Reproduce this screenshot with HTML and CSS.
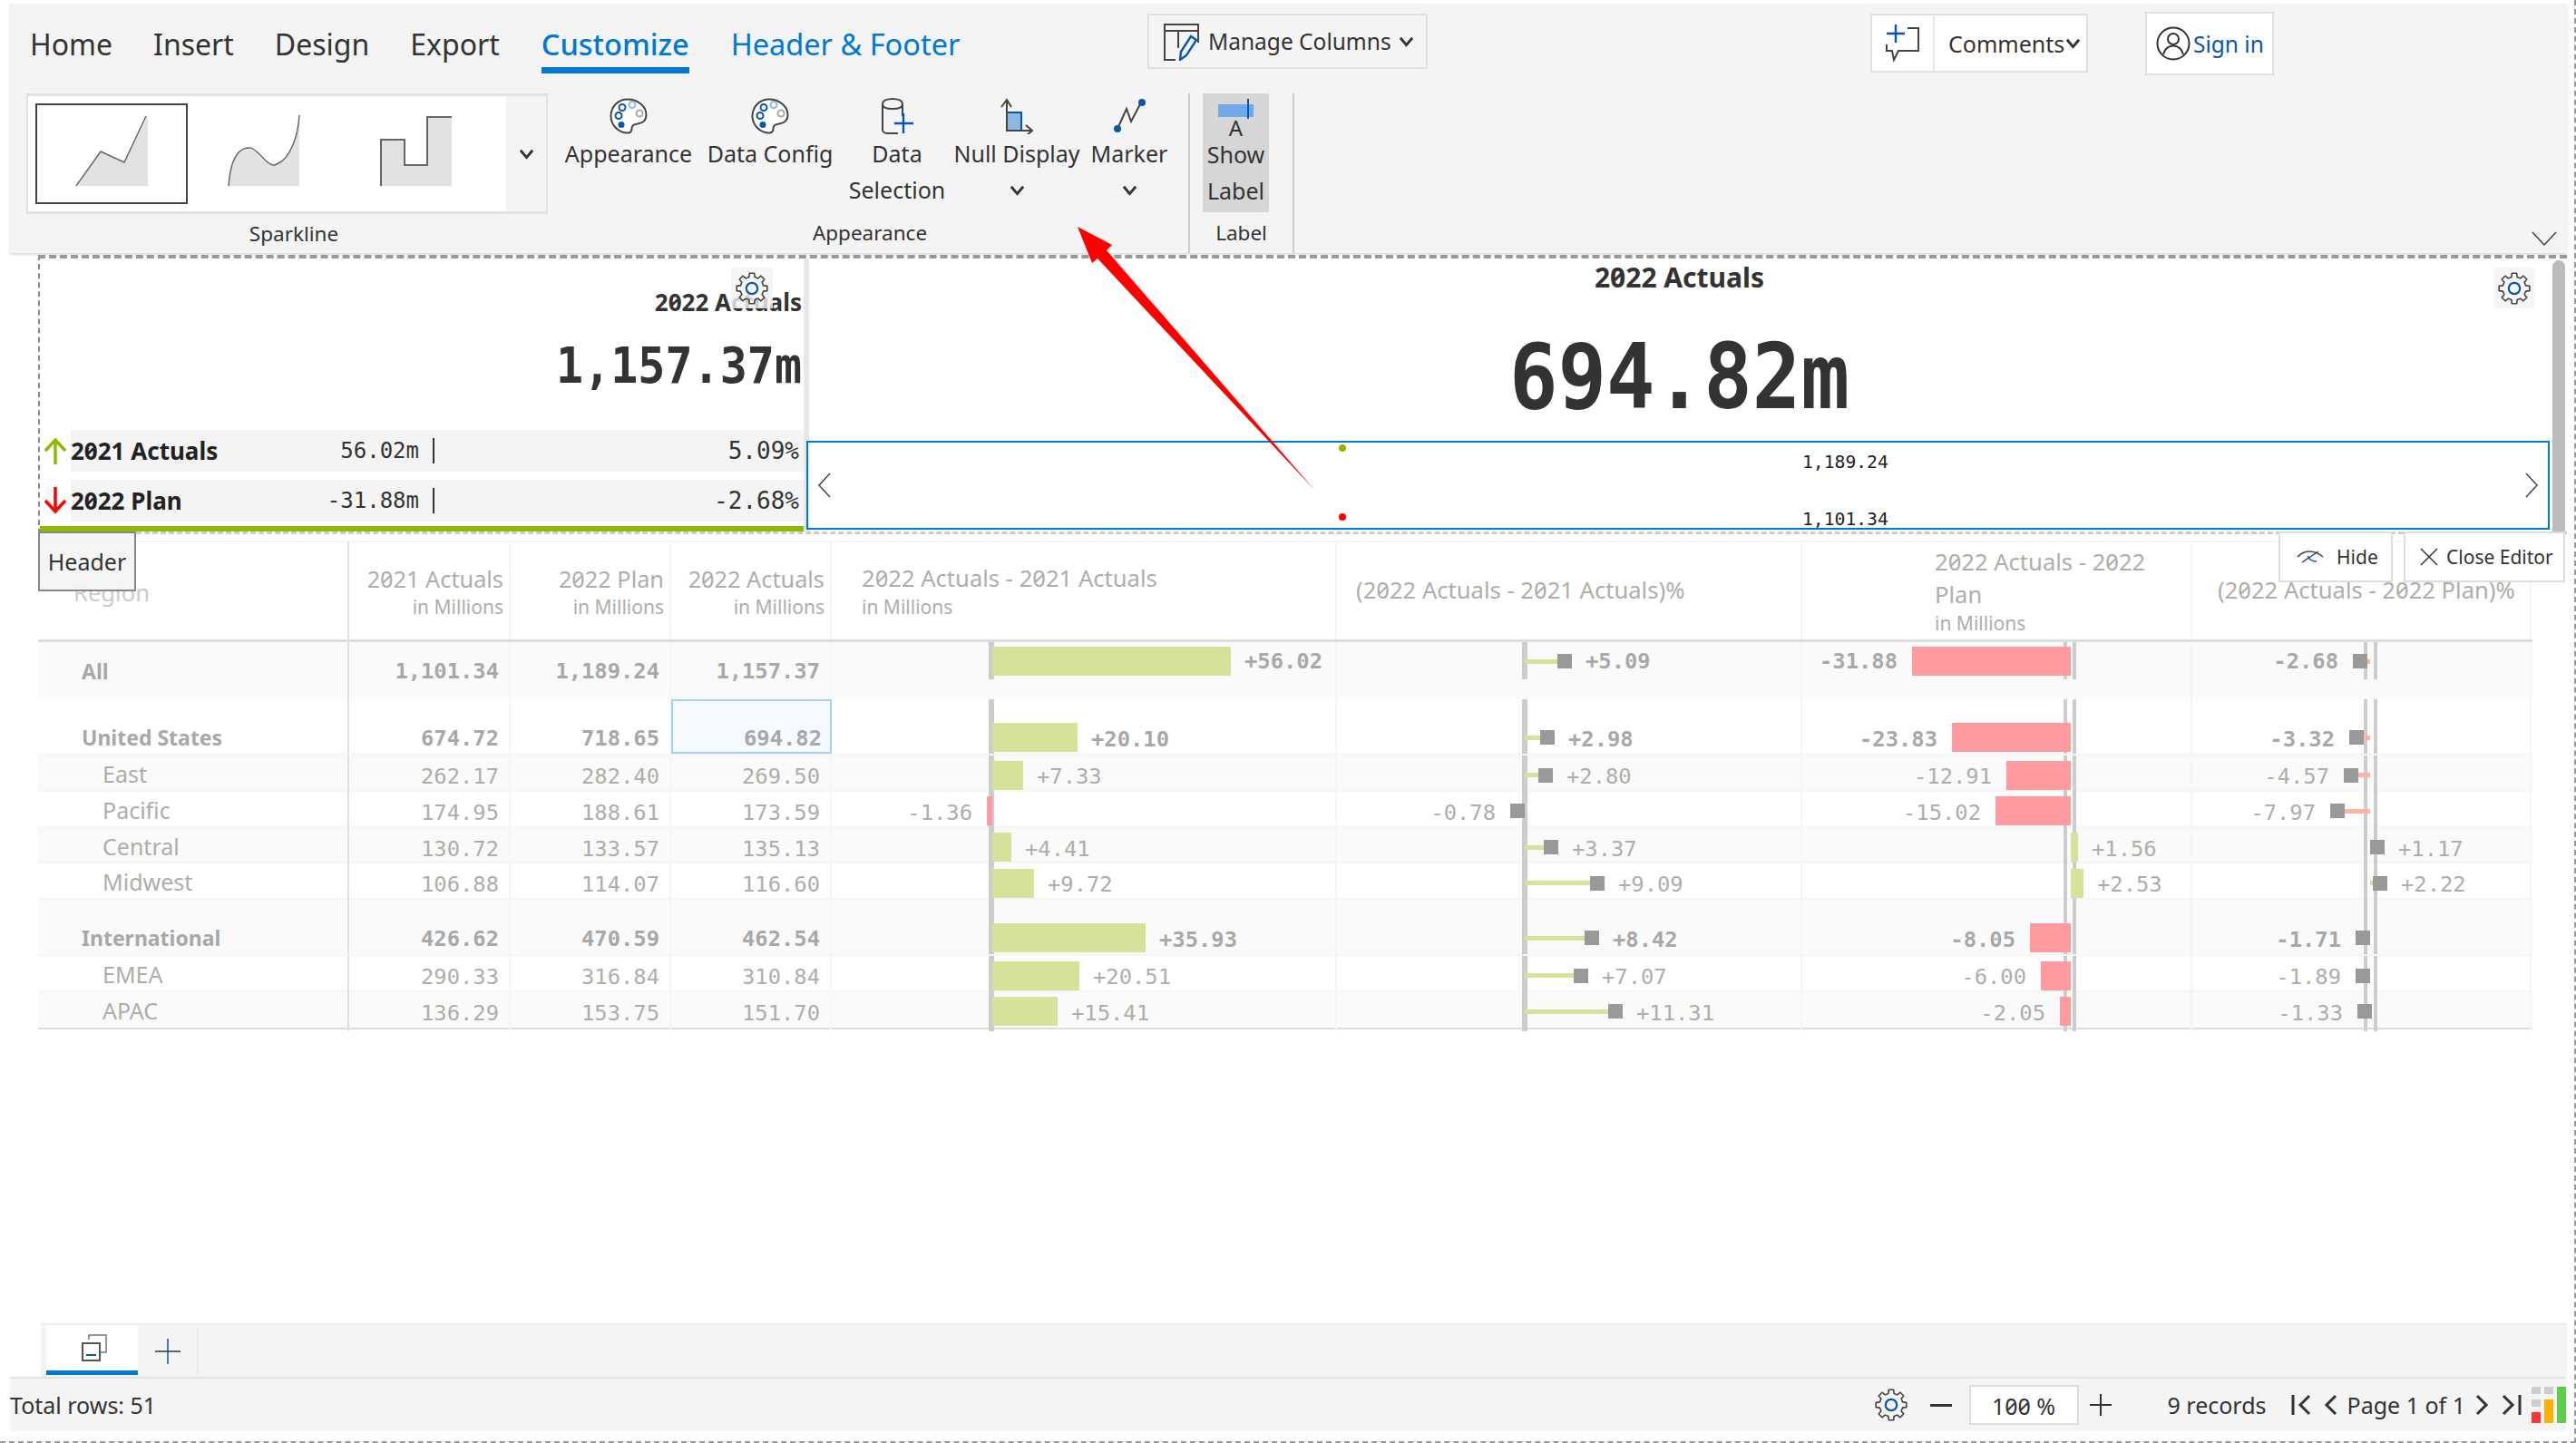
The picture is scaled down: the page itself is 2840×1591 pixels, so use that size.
FILE: index.html
```html
<!DOCTYPE html>
<html lang="en">

<head>
  <meta charset="UTF-8" />
  <title>Customize - Sparkline</title>
  <link rel="stylesheet" href="styles.css">
</head>

<body>
  <svg class="defs" width="0" height="0">
    <symbol id="gear" viewBox="-18 -18 36 36">
      <path fill="none" stroke="#444" stroke-width="1.6" stroke-linejoin="round" d="M-3.14 -12.6L-2.66 -16.8L2.66 -16.8L3.14 -12.6L6.69 -11.13L10 -13.76L13.76 -10L11.13 -6.69L12.6 -3.14L16.8 -2.66L16.8 2.66L12.6 3.14L11.13 6.69L13.76 10L10 13.76L6.69 11.13L3.14 12.6L2.66 16.8L-2.66 16.8L-3.14 12.6L-6.69 11.13L-10 13.76L-13.76 10L-11.13 6.69L-12.6 3.14L-16.8 2.66L-16.8 -2.66L-12.6 -3.14L-11.13 -6.69L-13.76 -10L-10 -13.76L-6.69 -11.13Z" />
      <circle r="6.2" fill="none" stroke="#0b56a8" stroke-width="2.2" />
    </symbol>
    <symbol id="chev" viewBox="0 0 14 10">
      <path fill="none" stroke="#333" stroke-width="2.4" d="M1.5 1.5L7 8L12.5 1.5" />
    </symbol>
    <symbol id="palette" viewBox="0 0 42 40">
      <path fill="#fff" stroke="#444" stroke-width="2" d="M20 1.5C9 1.5 1.5 10 1.5 20S10 38.5 20 38.5C24 38.500 24.500 36 24.500 33.500C24.500 30 27 29 31 28.500C37 27.500 40.500 24 40.500 19C40.500 9 31 1.500 20 1.500Z" />
      <circle cx="14" cy="10.500" r="3.500" fill="none" stroke="#0b56a8" stroke-width="2" />
      <circle cx="25" cy="7.500" r="3.500" fill="none" stroke="#8db8e6" stroke-width="2" />
      <circle cx="33" cy="17" r="3.500" fill="none" stroke="#aaa" stroke-width="2" />
      <circle cx="10" cy="19.500" r="3.500" fill="none" stroke="#0b56a8" stroke-width="2" />
      <circle cx="13" cy="29.500" r="3.500" fill="#0b56a8" />
    </symbol>
  </svg>

  <div class="app">
    <header class="ribbon">
      <div class="ribbon-top">
        <nav class="tabs">
          <a class="tab">Home</a>
          <a class="tab">Insert</a>
          <a class="tab">Design</a>
          <a class="tab">Export</a>
          <a class="tab active">Customize</a>
          <a class="tab context">Header &amp; Footer</a>
        </nav>
        <button class="top-btn manage">
          <svg width="42" height="42" viewBox="0 0 42 42">
            <path fill="none" stroke="#444" stroke-width="2" d="M14 41H2V2H39V22M2 9H39M17 9V28" />
            <path fill="none" stroke="#0b56a8" stroke-width="2.400" d="M19 41L20 32L31 15L37 19L26 36Z" />
          </svg>
          <span>Manage Columns</span>
          <svg class="chev" width="17" height="12"><use href="#chev" /></svg>
        </button>
        <div class="top-btn comments">
          <span class="comment-icon">
            <svg width="42" height="42" viewBox="0 0 42 42">
              <path fill="none" stroke="#444" stroke-width="2" d="M26 4H38V29H16L11 39L9 29H3V22" />
              <path fill="none" stroke="#0b56a8" stroke-width="2.400" d="M13 0V20M3 10H23" />
            </svg>
          </span>
          <span class="comment-text">Comments</span>
          <svg class="chev" width="17" height="12"><use href="#chev" /></svg>
        </div>
        <div class="top-btn signin">
          <svg width="38" height="38" viewBox="0 0 38 38">
            <circle cx="19" cy="19" r="17.500" fill="none" stroke="#333" stroke-width="2" />
            <circle cx="19" cy="14" r="6" fill="none" stroke="#333" stroke-width="2" />
            <path fill="none" stroke="#333" stroke-width="2" d="M8 31C10 24 14 21.500 19 21.500S28 24 30 31" />
          </svg>
          <span>Sign in</span>
        </div>
      </div>

      <div class="ribbon-body">
        <section class="group group-spark">
          <div class="gallery">
            <div class="gallery-items">
              <div class="spark-item selected">
                <svg width="80" height="80" viewBox="0 0 80 80"><path fill="#e2e2e2" stroke="none" d="M3 78L28 40L54 52L80 0V78Z" /><path fill="none" stroke="#666" stroke-width="1.500" d="M1 78L28 40L54 52L78 1" /></svg>
              </div>
              <div class="spark-item">
                <svg width="80" height="80" viewBox="0 0 80 80"><path fill="#e2e2e2" d="M1 78C3 40 15 38 24 38C34 38 40 60 54 54C70 48 78 20 79 0V78Z" /><path fill="none" stroke="#666" stroke-width="1.500" d="M1 78C3 50 10 36 24 36C34 36 44 60 54 54C70 48 78 20 79 0" /></svg>
              </div>
              <div class="spark-item">
                <svg width="80" height="80" viewBox="0 0 80 80"><path fill="#e2e2e2" d="M1 78V27H27V55H52V2H79V78Z" /><path fill="none" stroke="#666" stroke-width="2" d="M1 78V27H27V55H52V2H79" /></svg>
              </div>
            </div>
            <div class="gallery-more"><svg width="17" height="12"><use href="#chev" /></svg></div>
          </div>
          <div class="caption">Sparkline</div>
        </section>

        <section class="group group-appearance">
          <div class="tools">
            <div class="tool">
              <svg width="42" height="40"><use href="#palette" /></svg>
              <span>Appearance</span>
            </div>
            <div class="tool">
              <svg width="42" height="40"><use href="#palette" /></svg>
              <span>Data Config</span>
            </div>
            <div class="tool">
              <svg width="42" height="40" viewBox="0 0 42 40">
                <path fill="none" stroke="#444" stroke-width="2" d="M22 39H10C7 39 5 37 5 35V7C5 3 10 1 16 1S27 3 27 7V20M5 7C5 11 10 12 16 12S27 11 27 7" />
                <path fill="none" stroke="#0b56a8" stroke-width="2.400" d="M28 17V39M18 28H39" />
              </svg>
              <span>Data<br>Selection</span>
            </div>
            <div class="tool">
              <svg width="42" height="40" viewBox="0 0 42 40">
                <rect x="10" y="16" width="16" height="20" fill="#8db8e6" stroke="#0b56a8" stroke-width="2" />
                <path fill="none" stroke="#444" stroke-width="2" d="M10 36V2M4 10L10 2L15 10M10 36H38M31 30L38 36L31 42" />
              </svg>
              <span>Null Display</span>
              <svg class="tool-chev" width="17" height="12"><use href="#chev" /></svg>
            </div>
            <div class="tool">
              <svg width="42" height="40" viewBox="0 0 42 40">
                <path fill="none" stroke="#444" stroke-width="2" d="M8 34L18 12L23 26L34 5" />
                <circle cx="8" cy="34" r="4" fill="#0b56a8" />
                <circle cx="35" cy="5" r="4" fill="#0b56a8" />
              </svg>
              <span>Marker</span>
              <svg class="tool-chev" width="17" height="12"><use href="#chev" /></svg>
            </div>
          </div>
          <div class="caption">Appearance</div>
        </section>

        <section class="group group-label">
          <div class="tool show-label">
            <svg width="42" height="40" viewBox="0 0 42 40">
              <rect x="1" y="6" width="39" height="14" fill="#6ea9ea" />
              <path fill="none" stroke="#0b56a8" stroke-width="2" d="M34 0V22" />
            </svg>
            <span class="label-a">A</span>
            <span>Show<br>Label</span>
          </div>
          <div class="caption">Label</div>
        </section>
        <svg class="collapse" width="28" height="16" viewBox="0 0 28 16"><path fill="none" stroke="#444" stroke-width="1.500" d="M1 1L14 15L27 1" /></svg>
      </div>
    </header>

    <section class="editor">
      <div class="kpi kpi-small">
        <div class="kpi-gear"><svg width="36" height="36"><use href="#gear" /></svg></div>
        <div class="kpi-title">2022 Actuals</div>
        <div class="kpi-value">1,157.37m</div>
        <div class="compare">
          <div class="compare-row">
            <svg class="updown" width="26" height="30" viewBox="0 0 26 30"><path fill="none" stroke="#8fb800" stroke-width="3.500" d="M13 30V3M2 15L13 3L24 15" /></svg>
            <div class="compare-body">
              <b>2021 Actuals</b><span class="compare-num">56.02m</span><i class="compare-bar"></i><span class="compare-pct">5.09%</span>
            </div>
          </div>
          <div class="compare-row">
            <svg class="updown" width="26" height="30" viewBox="0 0 26 30"><path fill="none" stroke="#f00" stroke-width="3.500" d="M13 0V27M2 15L13 27L24 15" /></svg>
            <div class="compare-body">
              <b>2022 Plan</b><span class="compare-num">-31.88m</span><i class="compare-bar"></i><span class="compare-pct">-2.68%</span>
            </div>
          </div>
        </div>
        <div class="kpi-green"></div>
      </div>

      <div class="kpi kpi-big">
        <div class="kpi-gear"><svg width="36" height="36"><use href="#gear" /></svg></div>
        <div class="big-title">2022 Actuals</div>
        <div class="big-value">694.82m</div>
        <div class="spark-box">
          <svg class="nav" width="16" height="28" viewBox="0 0 16 28"><path fill="none" stroke="#444" stroke-width="1.500" d="M14 1L2 14L14 27" /></svg>
          <div class="spark-canvas">
            <div class="dots"><i class="dot green"></i><i class="dot red"></i></div>
            <div class="spark-nums"><span>1,189.24</span><span>1,101.34</span></div>
          </div>
          <svg class="nav" width="16" height="28" viewBox="0 0 16 28"><path fill="none" stroke="#444" stroke-width="1.500" d="M2 1L14 14L2 27" /></svg>
        </div>
      </div>
      <div class="scrollbar"></div>
    </section>

    <section class="table">
      <div class="float-btn header-btn">Header</div>
      <div class="float-group">
        <div class="float-btn hide-btn">
          <svg width="30" height="20" viewBox="0 0 30 20">
            <path fill="none" stroke="#444" stroke-width="1.500" d="M1 10C8 2 20 2 29 10M6 16L24 4" />
            <path fill="none" stroke="#0b56a8" stroke-width="1.500" d="M12 9C14 13 18 15 22 15" />
          </svg>
          Hide
        </div>
        <div class="float-btn close-btn">
          <svg width="20" height="20" viewBox="0 0 20 20"><path fill="none" stroke="#333" stroke-width="1.500" d="M1 1L19 19M19 1L1 19" /></svg>
          Close Editor
        </div>
      </div>

      <div class="row head">
        <div class="cell label">Region</div>
        <div class="cell num"><div>2021 Actuals</div><small>in Millions</small></div>
        <div class="cell num"><div>2022 Plan</div><small>in Millions</small></div>
        <div class="cell num"><div>2022 Actuals</div><small>in Millions</small></div>
        <div class="cell left pad33"><div>2022 Actuals - 2021 Actuals</div><small>in Millions</small></div>
        <div class="cell left pad21"><div>(2022 Actuals - 2021 Actuals)%</div></div>
        <div class="cell left pad146"><div>2022 Actuals - 2022<br>Plan</div><small>in Millions</small></div>
        <div class="cell left pad28"><div>(2022 Actuals - 2022 Plan)%</div></div>
      </div>

      <div class="row row-all strong">
        <div class="cell label">All</div>
        <div class="cell num">1,101.34</div><div class="cell num">1,189.24</div><div class="cell num">1,157.37</div>
        <div class="cell chart c-var"><div class="neg"></div><div class="pos"><i class="bar up" style="width:263px"></i><span>+56.02</span></div></div>
        <div class="cell chart c-varp"><div class="neg"></div><div class="pos"><i class="stem up" style="width:36px"></i><i class="mark"></i><span>+5.09</span></div></div>
        <div class="cell chart c-plan"><div class="neg"><span>-31.88</span><i class="bar down" style="width:175px"></i></div><div class="pos"></div></div>
        <div class="cell chart c-planp"><div class="neg"><span>-2.68</span><i class="mark"></i><i class="stem down" style="width:3px"></i></div><div class="pos"></div></div>
      </div>

      <div class="row row-group strong">
        <div class="cell label">United States</div>
        <div class="cell num">674.72</div><div class="cell num">718.65</div><div class="cell num selected-cell">694.82</div>
        <div class="cell chart c-var"><div class="neg"></div><div class="pos"><i class="bar up" style="width:94px"></i><span>+20.10</span></div></div>
        <div class="cell chart c-varp"><div class="neg"></div><div class="pos"><i class="stem up" style="width:17px"></i><i class="mark"></i><span>+2.98</span></div></div>
        <div class="cell chart c-plan"><div class="neg"><span>-23.83</span><i class="bar down" style="width:131px"></i></div><div class="pos"></div></div>
        <div class="cell chart c-planp"><div class="neg"><span>-3.32</span><i class="mark"></i><i class="stem down" style="width:7px"></i></div><div class="pos"></div></div>
      </div>

      <div class="row shade">
        <div class="cell label sub">East</div>
        <div class="cell num">262.17</div><div class="cell num">282.40</div><div class="cell num">269.50</div>
        <div class="cell chart c-var"><div class="neg"></div><div class="pos"><i class="bar up" style="width:34px"></i><span>+7.33</span></div></div>
        <div class="cell chart c-varp"><div class="neg"></div><div class="pos"><i class="stem up" style="width:15px"></i><i class="mark"></i><span>+2.80</span></div></div>
        <div class="cell chart c-plan"><div class="neg"><span>-12.91</span><i class="bar down" style="width:71px"></i></div><div class="pos"></div></div>
        <div class="cell chart c-planp"><div class="neg"><span>-4.57</span><i class="mark"></i><i class="stem down" style="width:13px"></i></div><div class="pos"></div></div>
      </div>

      <div class="row">
        <div class="cell label sub">Pacific</div>
        <div class="cell num">174.95</div><div class="cell num">188.61</div><div class="cell num">173.59</div>
        <div class="cell chart c-var"><div class="neg"><span>-1.36</span><i class="bar down" style="width:6px"></i></div><div class="pos"></div></div>
        <div class="cell chart c-varp"><div class="neg"><span>-0.78</span><i class="mark"></i></div><div class="pos"></div></div>
        <div class="cell chart c-plan"><div class="neg"><span>-15.02</span><i class="bar down" style="width:83px"></i></div><div class="pos"></div></div>
        <div class="cell chart c-planp"><div class="neg"><span>-7.97</span><i class="mark"></i><i class="stem down" style="width:28px"></i></div><div class="pos"></div></div>
      </div>

      <div class="row shade">
        <div class="cell label sub">Central</div>
        <div class="cell num">130.72</div><div class="cell num">133.57</div><div class="cell num">135.13</div>
        <div class="cell chart c-var"><div class="neg"></div><div class="pos"><i class="bar up" style="width:21px"></i><span>+4.41</span></div></div>
        <div class="cell chart c-varp"><div class="neg"></div><div class="pos"><i class="stem up" style="width:21px"></i><i class="mark"></i><span>+3.37</span></div></div>
        <div class="cell chart c-plan"><div class="neg"></div><div class="pos"><i class="bar up" style="width:8px"></i><span>+1.56</span></div></div>
        <div class="cell chart c-planp"><div class="neg"></div><div class="pos"><i class="mark"></i><span>+1.17</span></div></div>
      </div>

      <div class="row">
        <div class="cell label sub">Midwest</div>
        <div class="cell num">106.88</div><div class="cell num">114.07</div><div class="cell num">116.60</div>
        <div class="cell chart c-var"><div class="neg"></div><div class="pos"><i class="bar up" style="width:46px"></i><span>+9.72</span></div></div>
        <div class="cell chart c-varp"><div class="neg"></div><div class="pos"><i class="stem up" style="width:72px"></i><i class="mark"></i><span>+9.09</span></div></div>
        <div class="cell chart c-plan"><div class="neg"></div><div class="pos"><i class="bar up" style="width:14px"></i><span>+2.53</span></div></div>
        <div class="cell chart c-planp"><div class="neg"></div><div class="pos"><i class="stem up" style="width:3px"></i><i class="mark"></i><span>+2.22</span></div></div>
      </div>

      <div class="row row-group shade strong">
        <div class="cell label">International</div>
        <div class="cell num">426.62</div><div class="cell num">470.59</div><div class="cell num">462.54</div>
        <div class="cell chart c-var"><div class="neg"></div><div class="pos"><i class="bar up" style="width:169px"></i><span>+35.93</span></div></div>
        <div class="cell chart c-varp"><div class="neg"></div><div class="pos"><i class="stem up" style="width:66px"></i><i class="mark"></i><span>+8.42</span></div></div>
        <div class="cell chart c-plan"><div class="neg"><span>-8.05</span><i class="bar down" style="width:45px"></i></div><div class="pos"></div></div>
        <div class="cell chart c-planp"><div class="neg"><span>-1.71</span><i class="mark"></i></div><div class="pos"></div></div>
      </div>

      <div class="row">
        <div class="cell label sub">EMEA</div>
        <div class="cell num">290.33</div><div class="cell num">316.84</div><div class="cell num">310.84</div>
        <div class="cell chart c-var"><div class="neg"></div><div class="pos"><i class="bar up" style="width:96px"></i><span>+20.51</span></div></div>
        <div class="cell chart c-varp"><div class="neg"></div><div class="pos"><i class="stem up" style="width:54px"></i><i class="mark"></i><span>+7.07</span></div></div>
        <div class="cell chart c-plan"><div class="neg"><span>-6.00</span><i class="bar down" style="width:33px"></i></div><div class="pos"></div></div>
        <div class="cell chart c-planp"><div class="neg"><span>-1.89</span><i class="mark"></i></div><div class="pos"></div></div>
      </div>

      <div class="row shade last">
        <div class="cell label sub">APAC</div>
        <div class="cell num">136.29</div><div class="cell num">153.75</div><div class="cell num">151.70</div>
        <div class="cell chart c-var"><div class="neg"></div><div class="pos"><i class="bar up" style="width:72px"></i><span>+15.41</span></div></div>
        <div class="cell chart c-varp"><div class="neg"></div><div class="pos"><i class="stem up" style="width:92px"></i><i class="mark"></i><span>+11.31</span></div></div>
        <div class="cell chart c-plan"><div class="neg"><span>-2.05</span><i class="bar down" style="width:12px"></i></div><div class="pos"></div></div>
        <div class="cell chart c-planp"><div class="neg"><span>-1.33</span><i class="mark" style="margin-right:-2px"></i></div><div class="pos"></div></div>
      </div>
    </section>

    <div class="sheet-bar">
      <div class="sheet-tab">
        <svg width="28" height="30" viewBox="0 0 28 30">
          <path fill="none" stroke="#777" stroke-width="1.500" d="M8 6V1H27V20H20" />
          <rect x="1" y="10" width="19" height="19" fill="#fff" stroke="#555" stroke-width="2" />
          <path stroke="#0b56a8" stroke-width="2" d="M5 23H16" />
        </svg>
      </div>
      <div class="sheet-add">
        <svg width="28" height="28" viewBox="0 0 28 28"><path stroke="#0b56a8" stroke-width="1.500" d="M14 0V28" /><path stroke="#333" stroke-width="1.500" d="M0 14H28" /></svg>
      </div>
    </div>

    <footer class="status">
      <span>Total rows: 51</span>
      <div class="status-right">
        <svg class="status-gear" width="36" height="36"><use href="#gear" /></svg>
        <span class="zoom-minus"></span>
        <span class="zoom-box">100 %</span>
        <svg class="zoom-plus" width="24" height="24" viewBox="0 0 24 24"><path stroke="#333" stroke-width="2" d="M12 0V24M0 12H24" /></svg>
        <span class="records">9 records</span>
        <svg class="pager" width="22" height="24" viewBox="0 0 22 24"><path fill="none" stroke="#333" stroke-width="3" d="M2 1V23M20 2L10 12L20 22" /></svg>
        <svg class="pager" width="15" height="24" viewBox="0 0 15 24"><path fill="none" stroke="#333" stroke-width="3" d="M13 2L3 12L13 22" /></svg>
        <span class="page-text">Page 1 of 1</span>
        <svg class="pager" width="15" height="24" viewBox="0 0 15 24"><path fill="none" stroke="#333" stroke-width="3" d="M2 2L12 12L2 22" /></svg>
        <svg class="pager" width="22" height="24" viewBox="0 0 22 24"><path fill="none" stroke="#333" stroke-width="3" d="M2 2L12 12L2 22M20 1V23" /></svg>
        <div class="signal">
          <div class="signal-col"><i></i><i></i><b class="sig-red"></b></div>
          <div class="signal-col"><i></i><b class="sig-orange"></b></div>
          <div class="signal-col"><b class="sig-green"></b></div>
        </div>
      </div>
    </footer>
  </div>

  <svg class="red-arrow" width="2840" height="1591" viewBox="0 0 2840 1591">
    <polygon fill="#f00" points="1188,250 1226,270 1220,276 1450,541 1210,285 1204,290" />
  </svg>
</body>

</html>
```

FILE: styles.css
```css
* {
  margin: 0;
  padding: 0;
  box-sizing: border-box;
}

body {
  width: 2840px;
  height: 1591px;
  overflow: hidden;
  background: #fff;
  color: #333;
  font-family: "Noto Sans", "Open Sans", sans-serif;
  font-feature-settings: "zero";
  position: relative;
}

.defs {
  position: absolute;
}

.app {
  height: 1591px;
  display: flex;
  flex-direction: column;
  padding-bottom: 11px;
  border-right: 2px dashed #999;
  border-bottom: 2px dashed #999;
}

/* ribbon */
.ribbon {
  margin: 4px 8px 0 11px;
  height: 275px;
  background: #f4f4f4;
  box-shadow: 0 2px 3px #ddd;
  flex: none;
}

.ribbon-top {
  height: 99px;
  display: flex;
  align-items: flex-start;
}

.tabs {
  width: 1254px;
  padding-left: 22px;
  display: flex;
  gap: 45px;
}

.tab {
  margin-top: 20px;
  height: 57px;
  line-height: 50px;
  font-size: 32px;
  border-bottom: 7px solid transparent;
}

.tab.active {
  color: #0078d4;
  font-weight: 500;
  font-size: 32.500px;
  margin-left: 1px;
  border-bottom-color: #0078d4;
}

.tab.context {
  color: #0078d4;
  margin-left: 1px;
  font-size: 32.500px;
}

.top-btn {
  display: flex;
  align-items: center;
  font-family: inherit;
  font-feature-settings: inherit;
  color: #333;
  border: 2px solid #e0e0e0;
}

.manage {
  margin-top: 11px;
  width: 309px;
  height: 61px;
  padding-left: 15px;
  font-size: 24.500px;
  gap: 8px;
  background: #f4f4f4;
}

.comments {
  margin: 11px 0 0 488px;
  width: 240px;
  height: 65px;
  background: #fff;
  font-size: 25px;
}

.comment-icon {
  width: 69px;
  height: 100%;
  display: flex;
  align-items: center;
  justify-content: center;
  border-right: 2px solid #e8e8e8;
}

.comment-text {
  margin-left: 15px;
  margin-right: 1px;
}

.signin {
  margin: 9px 0 0 63px;
  width: 142px;
  height: 70px;
  padding-left: 10px;
  gap: 3px;
  background: #fff;
  color: #0b56a8;
  font-size: 24.500px;
}

.ribbon-body {
  height: 176px;
  display: flex;
  padding-left: 18px;
  position: relative;
}

.group {
  display: flex;
  flex-direction: column;
}

.caption {
  margin-top: auto;
  height: 44px;
  line-height: 44px;
  padding-bottom: 10px;
  text-align: center;
  font-size: 22.500px;
}

.group-spark {
  width: 575px;
}

.group-spark .caption {
  padding-left: 15px;
}

.group-appearance .caption {
  padding-left: 4px;
}

.gallery {
  height: 133px;
  display: flex;
  border: 2px solid #e2e2e2;
  border-top-width: 3px;
  border-bottom-width: 3px;
}

.gallery-items {
  width: 527px;
  background: #fff;
  padding: 8px;
  display: flex;
}

.spark-item {
  width: 168px;
  height: 111px;
  display: flex;
  justify-content: center;
  align-items: flex-end;
  padding-bottom: 16px;
  border: 2px solid transparent;
}

.spark-item.selected {
  border-color: #444;
}

.gallery-more {
  flex: 1;
  display: flex;
  align-items: center;
  justify-content: center;
}

.group-appearance {
  width: 708px;
  border-right: 2px solid #ccc;
}

.tools {
  display: grid;
  grid-template-columns: 178px 134px 146px 118px 130px;
}

.tool {
  display: flex;
  flex-direction: column;
  align-items: center;
  padding-top: 5px;
  font-size: 25px;
  line-height: 40px;
  text-align: center;
  white-space: nowrap;
}

.tool svg {
  flex: none;
  margin-bottom: 1px;
}

.tool-chev {
  margin-top: 15px;
}

.group-label {
  width: 115px;
  border-right: 2px solid #ccc;
}

.show-label {
  width: 73px;
  height: 131px;
  margin-left: 14px;
  background: #d6d6d6;
  padding-top: 6px;
}

.show-label span {
  line-height: 40px;
}

.show-label .label-a {
  height: 0;
  line-height: 26px;
  margin-top: -22px;
  margin-bottom: 22px;
  font-size: 24px;
}

.collapse {
  position: absolute;
  right: 11px;
  top: 152px;
}

/* editor strip with the two kpi cards */
.editor {
  margin: 2px 8px 0 42px;
  height: 308px;
  flex: none;
  display: flex;
  border-top: 4px dashed #999;
  border-bottom: 3px dashed #ccc;
  border-left: 2px dashed #888;
}

.kpi {
  position: relative;
}

.kpi-small {
  width: 842px;
  display: flex;
  flex-direction: column;
  align-items: stretch;
}

.kpi-gear {
  position: absolute;
  top: 10px;
  right: 34px;
  width: 46px;
  height: 45px;
  background: #f4f4f4cc;
  display: flex;
  align-items: center;
  justify-content: center;
}

.kpi-title {
  margin-top: 30px;
  padding-right: 2px;
  text-align: right;
  font-size: 26px;
  font-weight: 700;
  line-height: 36px;
}

.kpi-value {
  margin-top: 22px;
  padding-right: 2px;
  text-align: right;
  font-family: "DejaVu Sans Mono", monospace;
  font-size: 50px;
  font-weight: 700;
  line-height: 60px;
  transform: scaleY(1.12);
}

.compare {
  margin-top: auto;
  display: flex;
  flex-direction: column;
  gap: 9px;
}

.compare-row {
  display: flex;
  align-items: center;
}

.updown {
  width: 34px;
  padding: 0 4px;
}

.compare-body {
  flex: 1;
  height: 46px;
  background: #f4f4f4;
  display: flex;
  align-items: center;
  padding-right: 5px;
  font-size: 26px;
}

.compare-body b {
  width: 160px;
  color: #222;
  white-space: nowrap;
}

.compare-num {
  width: 224px;
  text-align: right;
  font-family: "DejaVu Sans Mono", monospace;
  font-size: 24px;
}

.compare-bar {
  width: 2px;
  height: 28px;
  margin-left: 15px;
  background: #333;
}

.compare-pct {
  flex: 1;
  text-align: right;
  font-family: "DejaVu Sans Mono", monospace;
  font-size: 26px;
}

.kpi-green {
  height: 6px;
  margin-top: 5px;
  background: #8fb800;
}

.kpi-big {
  flex: none;
  width: 1925px;
  border-left: 6px solid #e8e8e8;
  display: flex;
  flex-direction: column;
}

.kpi-big .kpi-gear {
  right: 16px;
}

.big-title {
  margin-top: 1px;
  text-align: center;
  font-size: 30px;
  font-weight: 700;
  line-height: 40px;
}

.big-value {
  margin-top: 36px;
  text-align: center;
  font-family: "DejaVu Sans Mono", monospace;
  font-size: 89px;
  font-weight: 700;
  line-height: 106px;
  transform: scaleY(1.12);
}

.spark-box {
  margin: 18px 0 0 -3px;
  height: 98px;
  border: 2px solid #0078d4;
  display: flex;
  align-items: center;
  padding: 0 10px;
  overflow: hidden;
}

.spark-canvas {
  flex: 1;
  align-self: stretch;
  display: flex;
  padding-left: 559px;
}

.dots {
  width: 8px;
  display: flex;
  flex-direction: column;
  justify-content: space-between;
  padding: 2px 0 8px;
}

.dot {
  width: 8px;
  height: 8px;
  border-radius: 50%;
}

.dot.green {
  background: #8fb800;
}

.dot.red {
  background: #f00;
}

.spark-nums {
  margin: 0 0 -2px 503px;
  display: flex;
  flex-direction: column;
  justify-content: space-between;
  font-family: "DejaVu Sans Mono", monospace;
  font-size: 19.700px;
  line-height: 22px;
  color: #222;
  padding-top: 11px;
}

.scrollbar {
  width: 14px;
  margin: 2px 0 0 3px;
  background: #bbb;
  border-radius: 7px 7px 0 0;
}

/* table */
.table {
  position: relative;
  margin: 7px 0 0 42px;
  width: 2750px;
  flex: none;
  color: #aeaea8;
  font-size: 25px;
}

.row {
  display: grid;
  grid-template-columns: 343px 178px 177px 177px 557px 513px 430px 374px;
  height: 39.750px;
  border-bottom: 2px solid #f5f5f5;
}

.row.shade {
  background: #fafafa;
}

.row.last {
  border-bottom: 2px solid #ddd;
  height: 41px;
}

.row-group {
  height: 62px;
}

.row-all {
  height: 63px;
  background: #fafafa;
  border-bottom: none;
}

.head {
  height: 112px;
  border-top: 2px solid #f6f6f6;
  border-bottom: 3px solid #ddd;
  line-height: 36px;
}

.head small {
  display: block;
  font-size: 21px;
  line-height: 26px;
}

.cell {
  border-right: 2px solid #f6f6f6;
  display: flex;
  flex-direction: column;
  justify-content: center;
  min-width: 0;
}

.cell.label {
  border-right-color: #e0e0e0;
  padding: 0 0 3px 48px;
  font-size: 25px;
}

.cell.label.sub {
  padding-left: 71px;
}

.head .cell {
  font-size: 25.600px;
  padding-bottom: 2px;
}

.head .label {
  padding: 5px 0 0 39px;
  color: #ccc;
}

.strong {
  font-weight: 700;
  color: #a8a8a8;
}

.strong .cell {
  justify-content: flex-end;
}

.strong .cell.chart {
  justify-content: initial;
}

.strong .cell.label {
  font-size: 23px;
  line-height: 36px;
  padding-bottom: 0;
}

.row-all .cell.label {
  padding-bottom: 13px;
}

.num {
  text-align: right;
  padding: 3px 11px 0 0;
  font-family: "DejaVu Sans Mono", monospace;
  font-size: 23.800px;
  line-height: 40px;
}

.head .num {
  font-family: inherit;
  font-size: 25.300px;
  padding: 0 6px 2px 0;
  line-height: 36px;
}

.row-group .num {
  line-height: 33px;
  padding-top: 0;
}

.row-all .num {
  padding-top: 0;
  padding-bottom: 11px;
}

.left.pad33 {
  padding-left: 33px;
}

.left.pad21 {
  padding-left: 21px;
}

.left.pad146 {
  padding-left: 146px;
}

.left.pad28 {
  padding-left: 28px;
}

.selected-cell {
  background: #f5faff;
  box-shadow: inset 0 0 0 2px #a5d0f5;
  border-right: none;
}

/* charts in the variance columns */
.chart {
  display: grid;
  align-items: center;
  font-family: "DejaVu Sans Mono", monospace;
  font-size: 23.800px;
  background-repeat: no-repeat;
}

.neg,
.pos {
  display: flex;
  align-items: center;
  height: 32px;
}

.neg {
  justify-content: flex-end;
}

.chart span {
  white-space: nowrap;
  padding-top: 3px;
}

.row-all .chart span {
  padding-top: 0;
}

.neg span {
  margin-right: 16px;
}

.pos span {
  margin-left: 15px;
}

.c-var {
  grid-template-columns: 177px 1fr;
  background-image: linear-gradient(#ccc, #ccc);
  background-position: 173px 0;
  background-size: 6px 100%;
}

.c-varp {
  grid-template-columns: 207px 1fr;
  background-image: linear-gradient(#ccc, #ccc);
  background-position: 204px 0;
  background-size: 6px 100%;
}

.c-plan {
  grid-template-columns: 296px 1fr;
  background-image: linear-gradient(#ccc, #ccc), linear-gradient(#ccc, #ccc);
  background-position: 288px 0, 298px 0;
  background-size: 4px 100%, 4px 100%;
}

.c-planp {
  grid-template-columns: 196px 1fr;
  background-image: linear-gradient(#ccc, #ccc), linear-gradient(#ccc, #ccc);
  background-position: 189px 0, 200px 0;
  background-size: 4px 100%, 4px 100%;
}

.row-group .chart {
  align-items: end;
  padding-bottom: 2px;
}

.row-all .chart {
  align-items: start;
  padding-top: 5px;
}

.row-all .c-var,
.row-all .c-varp {
  background-size: 6px 41px;
}

.row-all .c-plan,
.row-all .c-planp {
  background-size: 4px 41px, 4px 41px;
}

.bar {
  flex: none;
  height: 32px;
}

.bar.up {
  background: #d5e29a;
}

.bar.down {
  background: #ff9aa0;
}

.stem {
  flex: none;
  height: 5px;
}

.stem.up {
  background: #d5e29a;
}

.stem.down {
  background: #ffb3a0;
}

.mark {
  flex: none;
  width: 16px;
  height: 16px;
  background: #999;
}

/* floating editor buttons */
.float-btn {
  background: #fff;
  border: 2px solid #ddd;
  color: #333;
  font-size: 21px;
  font-weight: 400;
  display: flex;
  align-items: center;
  gap: 14px;
}

.header-btn {
  position: absolute;
  left: 0;
  top: -10px;
  width: 108px;
  height: 66px;
  z-index: 2;
  justify-content: center;
  background: #f4f4f4e6;
  border-color: #888;
  font-size: 25px;
}

.float-group {
  position: absolute;
  right: -36px;
  top: -10px;
  display: flex;
  gap: 12px;
  z-index: 2;
}

.hide-btn {
  width: 126px;
  height: 56px;
  padding-left: 18px;
}

.close-btn {
  width: 178px;
  height: 56px;
  padding-left: 16px;
  gap: 9px;
}

/* sheets and status bar */
.sheet-bar {
  margin: auto 8px 0 45px;
  height: 59px;
  flex: none;
  background: #f4f4f4;
  border-top: 2px solid #eee;
  display: flex;
  padding-left: 6px;
}

.sheet-tab {
  width: 101px;
  height: 55px;
  padding-left: 5px;
  background: #fff;
  border-bottom: 5px solid #0078d4;
  display: flex;
  align-items: center;
  justify-content: center;
}

.sheet-add {
  width: 67px;
  height: 50px;
  margin-top: 4px;
  display: flex;
  align-items: center;
  justify-content: center;
  border-right: 2px solid #eaeaea;
}

.status {
  margin: 0 9px 0 11px;
  height: 60px;
  flex: none;
  background: #f4f4f4;
  border-top: 2px solid #e2e2e2;
  display: flex;
  align-items: center;
  justify-content: space-between;
  font-size: 25px;
}

.status-right {
  display: flex;
  align-items: center;
}

.status-gear {
  margin-right: 1px;
}

.zoom-minus {
  width: 24px;
  height: 3px;
  margin: 0 19px 0 24px;
  background: #333;
}

.zoom-box {
  width: 121px;
  height: 44px;
  line-height: 42px;
  text-align: center;
  background: #fff;
  border: 2px solid #ddd;
}

.zoom-plus {
  margin: 0 62px 0 12px;
}

.records {
  margin-right: 27px;
}

.pager {
  flex: none;
}

.pager + .pager {
  margin-left: 14px;
}

.page-text {
  margin: 0 11px;
}

.page-text + .pager + .pager {
  margin-left: 14px;
}

.signal {
  margin-left: 11px;
  height: 40px;
  display: flex;
  gap: 4px;
}

.signal-col {
  width: 10px;
  display: flex;
  flex-direction: column;
  gap: 6px;
}

.signal-col i {
  height: 8px;
  background: #ccc;
}

.signal-col b {
  flex: 1;
}

.sig-red {
  background: #f33;
}

.sig-orange {
  background: #ffb000;
}

.sig-green {
  background: #5ccf4a;
}

.red-arrow {
  position: absolute;
  left: 0;
  top: 0;
  pointer-events: none;
  z-index: 5;
}
```
